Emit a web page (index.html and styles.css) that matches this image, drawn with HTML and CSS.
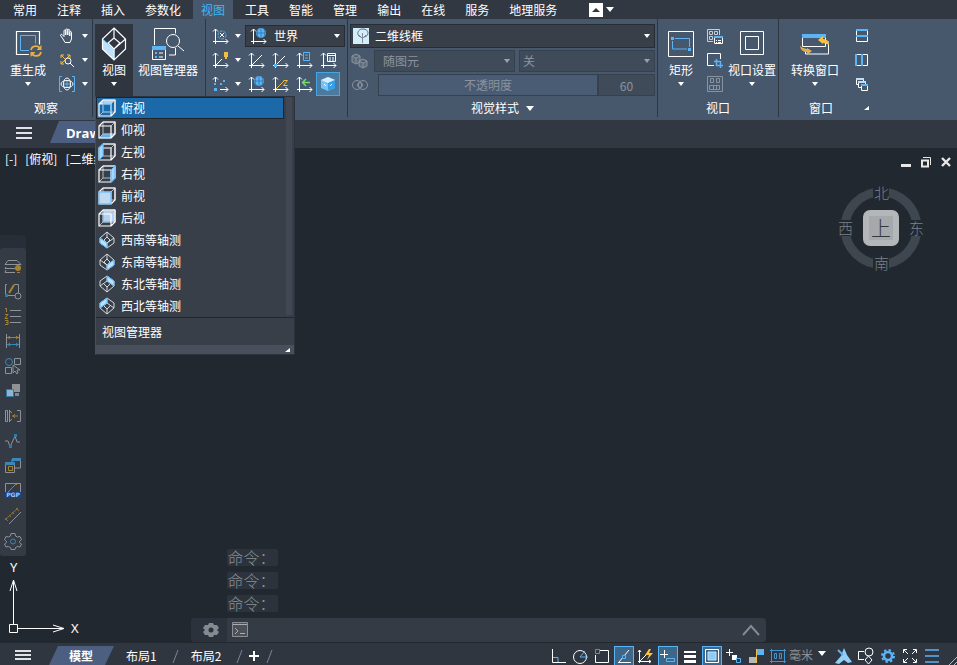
FILE: index.html
```html
<!DOCTYPE html>
<html lang="zh-CN">
<head>
    <meta charset="UTF-8">
    <meta name="viewport" content="width=device-width, initial-scale=1.0">
    <title>CAD</title>
    <link rel="stylesheet" href="styles.css">
</head>
<body>
    <svg class="sprite" aria-hidden="true">
        <symbol id="axes" viewBox="0 0 20 20">
            <path d="M5.500 3v15M3 15.500h15M3 5.500l2.500-2.500 2.500 2.500M15.500 13l2.500 2.500-2.500 2.500"/>
        </symbol>
        <symbol id="cube" viewBox="0 0 18 18">
            <path d="M5 1h12v12H5zM1 5l4-4M13 5l4-4M1 17l4-4M13 17l4-4" stroke="#b4b9bf"/>
            <path d="M1 5h12v12H1zM1 5l4-4h12v12l-4 4" stroke="#fff" stroke-width="1.200"/>
        </symbol>
        <symbol id="iso" viewBox="0 0 16 18">
            <path d="M8 1l7 6v5l-7 5-7-5V7zM8 1v5M8 6l-3 3 3 3 3-3zM1 7l7 5 7-5M8 12v5" stroke="#d6d9dd"/>
        </symbol>
        <symbol id="iso-north" viewBox="0 0 16 18">
            <path d="M8 1l7 5v5l-7 6-7-6V6zM8 17v-5M1 11l7-5 7 5M8 1v5M5 9l3 3 3-3" stroke="#d6d9dd"/>
        </symbol>
    </svg>

    <nav class="tabs">
        <button>常用</button>
        <button>注释</button>
        <button>插入</button>
        <button>参数化</button>
        <button class="active">视图</button>
        <button>工具</button>
        <button>智能</button>
        <button>管理</button>
        <button>输出</button>
        <button>在线</button>
        <button>服务</button>
        <button>地理服务</button>
        <div class="tabs-end">
            <button class="minimize" aria-label="最小化功能区"><i class="up"></i></button>
            <i class="caret wide"></i>
        </div>
    </nav>

    <div class="ribbon">
        <section class="panel">
            <div class="panel-body">
                <button class="big regen">
                    <svg width="30" height="32" viewBox="0 0 30 32">
                        <path d="M16 26.500H3.500v-23h23v13" stroke-width="1.200"/>
                        <path d="M16 22.500H7.500v-15h15v8" stroke="#5ab4f5"/>
                        <path d="M18 22c1-5 8-5 9-1M28 24c-1 5-8 5-9 1" stroke="#e5af49" stroke-width="1.800"/>
                        <path d="M28.500 17v5h-5zM17.500 29v-5h5z" fill="#e5af49" stroke="none"/>
                    </svg>
                    <span>重生成</span><i class="caret"></i>
                </button>
                <div class="grid two">
                    <button class="tool" aria-label="平移"><svg width="20" height="20" viewBox="0 0 20 20"><path d="M6 13l-2.500-3.500c0-1.500 1.500-1.500 2-.5l1.500 1.500V5c0-1.500 1.800-1.500 1.800 0v4V4c0-1.500 2-1.500 2 0v5V4.500c0-1.500 2-1.500 2 0V10V6.500c0-1.300 1.700-1.300 1.700 0V13l-1.500 3.500h-5z"/></svg></button><i class="caret"></i>
                    <button class="tool" aria-label="缩放"><svg width="20" height="20" viewBox="0 0 20 20"><path d="M4 8V5h3M10 5h3v3M4 11v3h3M4 5l9 9M13 5l-9 9" stroke="#f2be4a"/><circle cx="11" cy="11" r="3" fill="#47576c"/><path d="M13 13l4 4"/></svg></button><i class="caret"></i>
                    <button class="tool" aria-label="动态观察"><svg width="20" height="20" viewBox="0 0 20 20"><path d="M5 2.500H2.500v15H5M15 2.500h2.500v15H15" stroke="#5ab4f5"/><ellipse cx="10" cy="10" rx="6" ry="3.500"/><ellipse cx="10" cy="10" rx="3.500" ry="6"/><path d="M10 7v6M7 10h6" stroke="#5ab4f5"/></svg></button><i class="caret"></i>
                </div>
            </div>
            <h2>观察</h2>
        </section>

        <section class="panel">
            <div class="panel-body">
                <div class="menu-anchor">
                    <button class="big pressed">
                        <svg width="26" height="34" viewBox="0 0 26 34">
                            <path d="M1.500 12l11.500 10v11l-11.500-11z" fill="#bfe0fa" stroke="#5ab4f5"/>
                            <path d="M13 1l11.500 11v10L13 33 1.500 22V12zM13 1v10M13 11l-6 5 6 6 6-6zM24.500 12L13 22v11" stroke-width="1.200"/>
                        </svg>
                        <span>视图</span><i class="caret"></i>
                    </button>
                    <div class="menu">
                        <div class="menu-scroll">
                            <ul>
                                <li><button class="selected"><svg width="18" height="18"><path d="M1 5l4-4h12l-4 4z" fill="#a9d5f8" stroke="none"/><use href="#cube"/><path d="M5 5h8v8H5z" stroke="#5ab4f5"/></svg>俯视</button></li>
                                <li><button><svg width="18" height="18"><path d="M1 17l4-4h12l-4 4z" fill="#5ab4f5" stroke="#5ab4f5"/><use href="#cube"/></svg>仰视</button></li>
                                <li><button><svg width="18" height="18"><use href="#cube"/><path d="M1 5l4-4v12l-4 4z" fill="#a9d5f8" stroke="#5ab4f5"/></svg>左视</button></li>
                                <li><button><svg width="18" height="18"><use href="#cube"/><path d="M13 5l4-4v12l-4 4z" fill="#a9d5f8" stroke="#5ab4f5"/></svg>右视</button></li>
                                <li><button><svg width="18" height="18"><use href="#cube"/><path d="M1 5h12v12H1z" fill="#c2d9f2" stroke="#5ab4f5"/></svg>前视</button></li>
                                <li><button><svg width="18" height="18"><path d="M5 1h12v12H5z" fill="#b4d2f0" stroke="#5ab4f5"/><use href="#cube"/></svg>后视</button></li>
                                <li><button><svg width="18" height="18" viewBox="-1 0 18 18"><use href="#iso" width="16" height="18"/><path d="M1 7l7 5v5l-7-5z" fill="#bfe0fa" stroke="#5ab4f5"/></svg>西南等轴测</button></li>
                                <li><button><svg width="18" height="18" viewBox="-1 0 18 18"><use href="#iso" width="16" height="18"/><path d="M15 7l-7 5v5l7-5z" fill="#bfe0fa" stroke="#5ab4f5"/></svg>东南等轴测</button></li>
                                <li><button><svg width="18" height="18" viewBox="-1 0 18 18"><use href="#iso-north" width="16" height="18"/><path d="M8 1l7 5v5L8 6z" fill="#bfe0fa" stroke="#5ab4f5"/></svg>东北等轴测</button></li>
                                <li><button><svg width="18" height="18" viewBox="-1 0 18 18"><use href="#iso-north" width="16" height="18"/><path d="M8 1L1 6v5l7-5z" fill="#bfe0fa" stroke="#5ab4f5"/></svg>西北等轴测</button></li>
                            </ul>
                            <div class="scrollbar"></div>
                        </div>
                        <button class="menu-manager">视图管理器</button>
                        <div class="menu-grip"><i class="corner"></i></div>
                    </div>
                </div>
                <button class="big manager">
                    <svg width="34" height="32" viewBox="0 0 34 32">
                        <path d="M3.500 17V.5h21v5M24.500 20v7H18"/>
                        <circle cx="22" cy="13" r="6.500" fill="#47576c"/>
                        <path d="M27 18l6 5"/>
                        <path d="M1.500 19.500h13v12h-13z" fill="#47576c"/>
                        <path d="M1 18h14v4H1z" fill="#5ab4f5" stroke="none"/>
                        <path d="M4 24h2v2H4zM4 28h2v2H4z" fill="#5ab4f5" stroke="none"/>
                        <path d="M8 25h4M8 29h4"/>
                    </svg>
                    <span>视图管理器</span>
                </button>
            </div>
        </section>

        <section class="panel">
            <div class="panel-body">
                <div class="grid ucs">
                    <button class="tool" aria-label="UCS"><svg width="20" height="20"><use href="#axes"/><circle cx="12" cy="9" r="4" stroke="#5ab4f5" stroke-dasharray="3 1"/><path d="M10 7l4 4M14 7l-4 4"/></svg></button><i class="caret"></i>
                    <div class="combo world">
                        <svg width="20" height="20"><use href="#axes"/><circle cx="13" cy="7" r="5" fill="#5ab4f5" stroke="none"/><path d="M13 2v10M8 7h10M10 3c-1 3-1 5 0 8M16 3c1 3 1 5 0 8" stroke="#2c6c9f" stroke-width=".7"/></svg>
                        <select aria-label="坐标系"><option>世界</option></select>
                    </div>
                    <button class="tool" aria-label="原点"><svg width="20" height="20"><use href="#axes"/><path d="M6 15l6-6"/><path d="M14 2h4v5h-1v2h-2V7h-1z" fill="#f2be4a" stroke="none"/></svg></button><i class="caret"></i>
                    <button class="tool" aria-label="上一个"><svg width="20" height="20"><use href="#axes"/><path d="M6 15L16 5"/></svg></button>
                    <button class="tool" aria-label="Z轴"><svg width="20" height="20"><use href="#axes"/><path d="M6 15L15 6"/><path d="M4 14h3v3H4z" fill="#5ab4f5" stroke="none"/></svg></button>
                    <button class="tool" aria-label="视图"><svg width="20" height="20"><use href="#axes"/><path d="M9.500 2.500h6v8h-6zM11 5h3M11 8h3" stroke="#5ab4f5"/></svg></button>
                    <button class="tool" aria-label="对象"><svg width="20" height="20"><use href="#axes"/><path d="M9.500 3.500h8v8h-8zM9.500 5.500h8M11 8h2M14 8h2M11 10h2M14 10h2"/></svg></button>
                    <button class="tool" aria-label="三点"><svg width="20" height="20"><path d="M5.500 3v5M10 15.500h8M3 5.500l2.500-2.500 2.500 2.500M15.500 13l2.500 2.500-2.500 2.500"/><path d="M4 14h3v3H4zM4 9h2v2H4zM10 9h2v2h-2zM13 6h2v2h-2z" fill="#5ab4f5" stroke="none"/></svg></button><i class="caret"></i>
                    <button class="tool" aria-label="世界"><svg width="20" height="20"><use href="#axes"/><circle cx="13" cy="7" r="5" fill="#5ab4f5" stroke="none"/><path d="M13 2v10M8 7h10M10 3c-1 3-1 5 0 8M16 3c1 3 1 5 0 8" stroke="#2c6c9f" stroke-width=".7"/></svg></button>
                    <button class="tool" aria-label="绕Z轴"><svg width="20" height="20"><use href="#axes"/><path d="M6 15l9-9M13.500 6.500h4l-4 5h4" stroke="#f2be4a"/></svg></button>
                    <button class="tool" aria-label="应用"><svg width="20" height="20"><use href="#axes"/><path d="M16 8.500H9M12 5L8.500 8.500 12 12" stroke="#6fdc6f" stroke-width="1.500"/></svg></button>
                    <button class="tool on" aria-label="视图立方体"><svg width="20" height="20"><path d="M10 3l7 3v8l-7 3-7-3V6z" fill="#74c4f7" stroke="none"/><path d="M10 3l7 3-7 3-7-3z" fill="#d5effe" stroke="none"/><path d="M10 9l7-3v8l-7 3z" fill="#3a9ee6" stroke="none"/><path d="M6 10l2 2M12 12l2-2" stroke="#fff"/></svg></button>
                </div>
            </div>
        </section>

        <section class="panel">
            <div class="panel-body">
                <div class="styles">
                    <div class="combo visual">
                        <svg width="16" height="16"><path d="M0 0h16v16H0z" fill="#d3edfb" stroke="none"/><path d="M8 9c-5-1-4-8 2-8s7 7 1 8" stroke="#5b6d7c"/><path d="M9.500 5v10M6 7l3 3M13 7l-3 3" stroke="#7d8d99"/></svg>
                        <select aria-label="视觉样式"><option>二维线框</option></select>
                    </div>
                    <div class="style-row">
                        <svg width="20" height="20" class="dim"><path d="M2 5l4-2 4 2v6l-4 2-4-2zM6 7v6M2 5l4 2 4-2M9 10l4-2 4 2v5l-4 2-4-2zM13 12v5M9 10l4 2 4-2" fill="#5f6b7b"/></svg>
                        <div class="combo off"><select aria-label="边" disabled><option>随图元</option></select></div>
                        <div class="combo off"><select aria-label="阴影" disabled><option>关</option></select></div>
                    </div>
                    <div class="style-row opacity">
                        <svg width="20" height="20" class="dim"><circle cx="7" cy="10" r="4.500"/><circle cx="13" cy="10" r="4.500"/><circle cx="10" cy="10" r="2.500"/></svg>
                        <div class="slider">
                            <input type="range" id="opacity" value="60" disabled>
                            <label for="opacity">不透明度</label>
                        </div>
                        <input type="text" class="value" value="60" aria-label="不透明度值" disabled>
                    </div>
                </div>
            </div>
            <h2>视觉样式<i class="caret wide"></i></h2>
        </section>

        <section class="panel">
            <div class="panel-body">
                <button class="big rect">
                    <svg width="30" height="32" viewBox="0 0 30 32">
                        <path d="M2.500 3.500h25v25h-25z"/>
                        <path d="M6.500 13v8H21M9 10.500h14.500V19" stroke="#5ab4f5"/>
                        <path d="M5 9h3v3H5zM22 20h3v3h-3z" fill="#5ab4f5" stroke="none"/>
                    </svg>
                    <span>矩形</span><i class="caret"></i>
                </button>
                <div class="grid one">
                    <button class="tool" aria-label="命名视口"><svg width="20" height="20"><path d="M8 15.500H2.500v-12h12V9M4.500 5.500h3v3h-3zM9.500 5.500h3v3h-3zM4.500 10.500h3v3h-3z" stroke="#c6ccd4"/><path d="M9.500 11.500h8v6h-8z" fill="#47576c"/><path d="M9 10h9v2H9z" fill="#5ab4f5" stroke="none"/><path d="M11 14.500h1M13 14.500h3M11 16.500h1M13 16.500h3"/></svg></button>
                    <button class="tool" aria-label="剪裁视口"><svg width="20" height="20"><path d="M9 15.500H2.500v-12h13V9"/><path d="M11.500 9v6.500H18M9 11.500h6.500V18" stroke="#5ab4f5" stroke-width="1.500"/></svg></button>
                    <button class="tool" aria-label="合并视口"><svg width="20" height="20" class="dim"><path d="M2.500 2.500h15v15h-15zM5.500 4.500h3v4h-3zM11.500 4.500h3v4h-3zM4.500 11.500h10v4h-10zM8.500 12v3M11.500 12v3"/></svg></button>
                </div>
                <button class="big">
                    <svg width="30" height="32" viewBox="0 0 30 32"><path d="M3.500 3.500h23v23h-23zM8.500 8.500h13v13h-13z"/></svg>
                    <span>视口设置</span><i class="caret"></i>
                </button>
            </div>
            <h2>视口</h2>
        </section>

        <section class="panel last">
            <div class="panel-body">
                <button class="big switch">
                    <svg width="30" height="32" viewBox="0 0 30 32">
                        <path d="M28.500 13v13h-23v-3"/>
                        <path d="M2.500 6.500h23v12h-23z" fill="#47576c"/>
                        <path d="M2 6h24v4H2zM26 13h3v3h-3z" fill="#5ab4f5" stroke="none"/>
                        <path d="M18 12l5-4v3q6 0 6 6-3-2-6-2v1z" fill="#fcc23b" stroke="none"/>
                        <path d="M12 23l-5 4v-3q-6 0-7-6 3 3 7 3v-1z" fill="#e5af49" stroke="none"/>
                    </svg>
                    <span>转换窗口</span><i class="caret"></i>
                </button>
                <div class="grid one">
                    <button class="tool" aria-label="水平平铺"><svg width="20" height="20"><path d="M4.500 3.500h11v12h-11z"/><path d="M4 3h12v2H4zM4 9h12v2H4z" fill="#5ab4f5" stroke="none"/></svg></button>
                    <button class="tool" aria-label="垂直平铺"><svg width="20" height="20"><path d="M4.500 4.500h11v11h-11z"/><path d="M3 4h2v12H3zM9 4h2v12H9z" fill="#5ab4f5" stroke="none"/></svg></button>
                    <button class="tool" aria-label="层叠"><svg width="20" height="20"><path d="M4.500 4.500h7v6h-7z"/><path d="M6.500 7.500h7v6h-7z" fill="#47576c"/><path d="M9.500 10.500h6v6h-6z" fill="#47576c"/><path d="M4 4h8v2H4zM6 7h8v2H6z" fill="#c6dbef" stroke="none"/><path d="M9 10h7v2H9z" fill="#5ab4f5" stroke="none"/></svg></button>
                </div>
            </div>
            <h2>窗口<i class="corner"></i></h2>
        </section>
    </div>

    <div class="documents">
        <button class="burger" aria-label="文件菜单"><svg width="16" height="12"><path d="M0 1h16M0 6h16M0 11h16" stroke-width="2"/></svg></button>
        <button class="doc-tab">Drawing1.dwg</button>
    </div>

    <main class="canvas">
        <div class="viewport-labels">
            <button>[-]</button>
            <button>[俯视]</button>
            <button>[二维线框]</button>
        </div>
        <div class="window-buttons">
            <button aria-label="最小化"><svg width="12" height="12"><path d="M1 9.500h10" stroke-width="3"/></svg></button>
            <button aria-label="还原"><svg width="12" height="12"><path d="M3 1.500h7.500V9" /><path d="M2 4.500h6v6H2z" stroke-width="2"/></svg></button>
            <button aria-label="关闭"><svg width="12" height="12"><path d="M2 2l8 8M10 2l-8 8" stroke-width="2.400"/></svg></button>
        </div>
        <div class="compass">
            <svg width="86" height="90" viewBox="0 0 86 90">
                <circle cx="43" cy="45" r="36" stroke="#3e4650" stroke-width="9"/>
                <path d="M35 0h16v18H35zM35 72h16v18H35zM0 37h16v16H0zM70 37h16v16H70z" fill="#212830" stroke="none"/>
            </svg>
            <span class="n">北</span><span class="w">西</span><span class="e">东</span><span class="s">南</span>
            <button>上</button>
        </div>

        <aside class="palette">
            <div class="palette-head"></div>
            <div class="palette-body">
                <button aria-label="图层"><svg width="20" height="20"><path d="M5 4.500h9l4 4H2zM3 11l-1 1.500h10M3 14l-1 2.500h10"/><circle cx="15" cy="12" r="3" fill="#a5822f" stroke="none"/><path d="M14 16.500h3" stroke="#a5822f"/></svg></button>
                <button aria-label="编辑"><svg width="20" height="20"><path d="M4 3.500H2.500v11H12M11 3.500h4.500V12"/><path d="M6 12l5-8" stroke="#a5822f" stroke-width="2"/><circle cx="15" cy="15" r="3"/><path d="M2 13h3v3H2z" fill="#2f7ba8" stroke="none"/></svg></button>
                <button aria-label="编号"><svg width="20" height="20"><path d="M7 4.500h11M7 10.500h11M7 16.500h11"/><path d="M2 2.500h1.500V6M2 8.500h3l-3 4h3M2 14.500h3v4H2M3 16.500h2" stroke="#a5822f"/></svg></button>
                <button aria-label="标注"><svg width="20" height="20"><path d="M3.500 3v14M16.500 3v14"/><path d="M4 6.500h12M7 5L5 6.500 7 8M13 5l2 1.500L13 8" stroke="#a5822f"/><path d="M4 13.500h12M7 12l-2 1.500L7 15M13 12l2 1.500-2 1.500" stroke="#3d87b8"/></svg></button>
                <button aria-label="选择"><svg width="20" height="20"><circle cx="6" cy="6" r="3.500" stroke="#3d87b8"/><path d="M11.500 2.500h6v6h-6zM2.500 11.500h6v6h-6zM10 9v8l2-2 2 3 1-1-1-3h3z"/></svg></button>
                <button aria-label="块"><svg width="20" height="20"><path d="M9 3h8v8H9z" fill="#8f9398" stroke="none"/><path d="M3.500 8.500h7v7h-7z" fill="#91b5cf" stroke="#2f7ba8"/><path d="M12 12h4v3h-4z" fill="#6f8ea6" stroke="none"/></svg></button>
                <button aria-label="镜像"><svg width="20" height="20"><path d="M2.500 4.500h2v11h-2zM6.500 4v12M6 4l3 3M9 13l-3 3M14 4.500h3.500v11H14"/><path d="M9 10h6M12 8l-2 2 2 2" stroke="#a5822f"/></svg></button>
                <button aria-label="曲线"><svg width="20" height="20"><path d="M2 10h3l2 6 5-11 2 6h3" /><path d="M6 14h3v3H6zM11 3h3v3h-3z" fill="#2f7ba8" stroke="none"/></svg></button>
                <button aria-label="参照"><svg width="20" height="20"><path d="M2.500 7.500h9v9h-9zM11 12h6.500V3.500H9V7"/><path d="M2 6h10v3H2zM9 2h9v3H9z" fill="#3d87b8" stroke="none"/><path d="M5.500 10.500h4v4h-4z" stroke="#a5822f"/></svg></button>
                <button aria-label="PGP"><svg width="20" height="20"><path d="M2.500 11V2.500h15V11"/><path d="M5 11l8-8M12 2l2 2" stroke="#a5822f"/><path d="M2 11h16v6H2z" fill="#0e4694" stroke="none"/><text x="10" y="16" text-anchor="middle">PGP</text></svg></button>
                <button aria-label="测量"><svg width="20" height="20"><path d="M6 18L18 6"/><path d="M2 14L15 2M2 12l3 3M6 9l2 2M9 6l2 2M13 2l3 3" stroke="#8a7038"/></svg></button>
                <button aria-label="设置"><svg width="20" height="20"><path d="M8 2.500h4l.5 2.500 2 1 2.500-.5 1.500 3-2 2v1l2 1.500-1.500 3-2.500-.5-2 1-.5 2H8l-.5-2-2-1-2.500.5-1.500-3 2-1.500v-1l-2-2 1.500-3 2.500.5 2-1z"/><circle cx="10" cy="10.500" r="2.500" stroke="#3d87b8"/></svg></button>
            </div>
        </aside>

        <svg class="origin" width="84" height="90" viewBox="0 -10 84 90">
            <path d="M13.500 20v45M18 68.500h45M9.500 64.500h8v8h-8zM10 31l3.500-11 3.500 11M53 65l11 3.500-11 3.500"/>
            <text x="10" y="12">Y</text>
            <text x="71" y="73">X</text>
        </svg>

        <div class="console">
            <p>命令：</p>
            <p>命令：</p>
            <p>命令：</p>
            <div class="command">
                <button class="settings" aria-label="自定义"><svg width="18" height="18"><path d="M7 2h4l1 2h3l2 3-2 2 2 2-2 3h-3l-1 2H7l-1-2H3l-2-3 2-2-2-2 2-3h3z" fill="#858a91" stroke="none"/><circle cx="9" cy="9" r="2.500" fill="#2b323b" stroke="none"/></svg></button>
                <label for="cmd"><svg width="16" height="16"><path d="M.5.500h15v14H.500z" fill="#4c5159" stroke="#8b8f95"/><path d="M1 2.500h14M3 6l3 3-3 3M8 11.500h5" stroke="#a9adb2"/></svg></label>
                <input type="text" id="cmd" aria-label="命令">
                <button class="expand" aria-label="展开"><svg width="18" height="12"><path d="M1 11l8-9 8 9" stroke="#858a91" stroke-width="2"/></svg></button>
            </div>
        </div>
    </main>

    <footer class="status">
        <button class="burger" aria-label="布局菜单"><svg width="16" height="12"><path d="M0 2h16M0 6h16M0 10h16" stroke-width="2"/></svg></button>
        <button class="layout current">模型</button>
        <button class="layout">布局1</button>
        <svg class="slash" width="7" height="13"><path d="M1 13L6 0"/></svg>
        <button class="layout">布局2</button>
        <svg class="slash" width="7" height="13"><path d="M1 13L6 0"/></svg>
        <button class="add" aria-label="新建布局"><svg width="12" height="12"><path d="M6 1v10M1 6h10" stroke-width="2"/></svg></button>
        <svg class="slash" width="7" height="13"><path d="M1 13L6 0"/></svg>

        <div class="toggles">
            <button aria-label="正交"><svg width="20" height="20"><path d="M4.500 3v13.500H18"/><path d="M5 11.500h5V16" stroke="#5ab4f5"/></svg></button>
            <button aria-label="极轴"><svg width="20" height="20"><circle cx="10" cy="11" r="6.500"/><path d="M10 11h8M10 11l5-6" stroke="#5ab4f5"/></svg></button>
            <button aria-label="对象捕捉"><svg width="20" height="20"><path d="M8 4.500h8.500v12h-13V9"/><path d="M3.500 3.500h4v4h-4z" stroke="#f05a50"/></svg></button>
            <button class="on" aria-label="对象追踪"><svg width="20" height="20"><path d="M4 16.500h13M5 16L15 4"/><path d="M8.500 9.500h3v3h-3z" stroke="#5ab4f5" fill="#3d6688"/></svg></button>
            <button aria-label="动态UCS"><svg width="20" height="20"><path d="M3.500 4v13M2 15.500h13M4 15l8-8M2 6l1.500-2L5 6M13 14l2 1.500-2 1.500"/><path d="M13 3l-4 6h4l-2 5 6-7h-4l2-4z" fill="#fcc23b" stroke="none"/></svg></button>
            <button class="on" aria-label="动态输入"><svg width="20" height="20"><path d="M6.500 4v8M2 8.500h8"/><path d="M8.500 12.500h8v3h-8z" stroke="#5ab4f5"/></svg></button>
            <button aria-label="线宽"><svg width="20" height="20"><path d="M4 6h12" stroke-width="2"/><path d="M4 10.500h12M4 15.500h12" stroke-width="3"/></svg></button>
            <button class="on" aria-label="透明度"><svg width="20" height="20"><path d="M3.500 3.500h13v13h-13z"/><path d="M6 6h8v8H6z" fill="#8ecbf5" stroke="#c0e2fa"/></svg></button>
            <button aria-label="循环选择"><svg width="20" height="20"><path d="M5.500 3v7M2 6.500h7"/><path d="M8 9h5v5H8z" fill="#fff" stroke="none"/><path d="M12.500 12.500h4v4h-4z" stroke="#5ab4f5" fill="#2f3640"/></svg></button>
            <button aria-label="注释监视"><svg width="20" height="20"><path d="M11 3h7v6h-7z" fill="#5ab4f5" stroke="none"/><path d="M10.500 3v14" stroke="#f2be4a"/><path d="M3 11h7v6H3z" fill="#b8b8b8" stroke="none"/></svg></button>
            <button class="units" aria-label="单位"><svg width="20" height="20"><path d="M3.500 3v14M16.500 3v14M2 4.500h16M2 15.500h16M6.500 7.500h2v5h-2zM11.500 7.500h2v5h-2z" stroke="#3f94d6"/></svg>毫米<i class="caret wide"></i></button>
            <button aria-label="注释比例"><svg width="20" height="20"><path d="M10 2l3 7 5 7-4 1-4-3-5 4-4-1 6-7z" fill="#8fd0fa" stroke="none"/><path d="M4 4l5 5" stroke="#5ab4f5" stroke-width="2"/></svg></button>
            <button aria-label="隔离对象"><svg width="20" height="20"><path d="M8 5.500H2.500v8H8"/><circle cx="13" cy="6" r="4"/><path d="M12.500 10l3.500 4-3.500 4L9 14z"/></svg></button>
            <button aria-label="工作空间"><svg width="20" height="20"><circle cx="10" cy="10" r="4" stroke="#5ab4f5" stroke-width="2.500"/><circle cx="10" cy="10" r="6" stroke="#5ab4f5" stroke-width="2" stroke-dasharray="2.400 2.300"/></svg></button>
            <button aria-label="全屏"><svg width="20" height="20"><path d="M3.500 7V3.500H7M13 3.500h3.500V7M16.500 13v3.500H13M7 16.500H3.500V13M4 4l4 4M16 4l-4 4M4 16l4-4M16 16l-4-4"/></svg></button>
            <button aria-label="自定义"><svg width="20" height="20"><path d="M3 4h14M3 10h14M3 16h14" stroke="#5ab4f5" stroke-width="1.500"/></svg></button>
            <svg class="resize" width="8" height="20"><path d="M0 19l8-8M4 20l4-4" stroke="#b8bcc1"/></svg>
        </div>
    </footer>
</body>
</html>
```
FILE: styles.css
```css
* {
    box-sizing: border-box;
}
body {
    display: flex;
    flex-direction: column;
    height: 100vh;
    margin: 0;
    overflow: hidden;
    background-color: #212830;
    color: #fff;
    font-family: "Noto Sans CJK SC", "Noto Sans", sans-serif;
    font-size: 12px;
    line-height: 18px;
}
button, input, select {
    margin: 0;
    padding: 0;
    border: none;
    background: none;
    color: inherit;
    font: inherit;
    white-space: nowrap;
}
svg {
    flex: none;
    display: block;
    fill: none;
    stroke: #fff;
}
.sprite {
    position: absolute;
    width: 0;
    height: 0;
}
.caret {
    flex: none;
    align-self: center;
    justify-self: center;
    border: 3px solid transparent;
    border-top: 4px solid #fff;
    border-bottom: none;
}
.caret.wide {
    border-width: 5px 4px 0;
}
.corner {
    border-left: 5px solid transparent;
    border-bottom: 4px solid #fff;
}

/* menu tabs */
.tabs {
    display: flex;
    flex: none;
    height: 19px;
    padding-left: 3px;
    background-color: #323842;
}
.tabs > button {
    margin: 0 2px;
    padding: 0 8px;
    line-height: 20px;
}
.tabs > .active {
    background-color: #47576c;
    color: #3fb8f5;
}
.tabs-end {
    display: flex;
    align-items: center;
    gap: 3px;
    margin-left: 22px;
}
.minimize {
    display: flex;
    align-items: center;
    justify-content: center;
    width: 14px;
    height: 14px;
    background-color: #fff;
}
.up {
    border: 4px solid transparent;
    border-top: none;
    border-bottom: 4px solid #323842;
}

/* ribbon */
.ribbon {
    display: flex;
    flex: none;
    height: 101px;
    background-color: #47576c;
}
.panel {
    display: flex;
    flex-direction: column;
    height: 98px;
    padding: 5px 2px 0;
    border-right: 1px solid #2f3640;
}
.panel.last {
    border: none;
}
.panel-body {
    display: flex;
    height: 72px;
}
.panel h2 {
    display: flex;
    align-items: center;
    justify-content: center;
    gap: 7px;
    margin: 3px 0 0;
    font-size: 12px;
    font-weight: normal;
}
.panel.last h2 {
    position: relative;
    padding-right: 14px;
}
.last .corner {
    position: absolute;
    right: 6px;
}
.big {
    display: flex;
    flex-direction: column;
    align-items: center;
    padding-top: 3px;
}
.big svg {
    height: 34px;
}
.big span {
    line-height: 18px;
}
.big .caret {
    margin-top: 3px;
}
.regen {
    width: 52px;
}
.manager {
    width: 70px;
}
.rect {
    width: 42px;
}
.switch {
    width: 68px;
}
.pressed {
    width: 38px;
    height: 72px;
    background-color: #2f3640;
}
.grid {
    display: grid;
    grid-auto-rows: 24px;
}
.grid.one {
    grid-template-columns: 26px;
}
.grid.two {
    grid-template-columns: 25px 11px;
}
.grid.ucs {
    grid-template-columns: 24px 12px repeat(4, 24px);
    padding-right: 5px;
}
.tool {
    display: flex;
    align-items: center;
    justify-content: center;
}
.tool.on {
    background-color: #4b7a9e;
    border: 1px solid #43a5e6;
}
.dim {
    stroke: #8a939f;
}

/* drop-downs and fields */
.combo {
    position: relative;
    display: flex;
    align-items: center;
    flex: 1;
    gap: 6px;
    min-width: 0;
    padding-left: 2px;
    background-color: #393f49;
    border: 1px solid #272d35;
}
.combo::after {
    content: "";
    position: absolute;
    right: 4px;
    border: 3px solid transparent;
    border-top: 4px solid #fff;
    border-bottom: none;
    pointer-events: none;
}
.combo select {
    flex: 1;
    min-width: 0;
    height: 20px;
    appearance: none;
    outline: none;
}
.combo.world {
    grid-column: span 4;
    margin: 1px -5px 1px 1px;
}
.combo.visual {
    flex: none;
    height: 24px;
}
.combo.off {
    background-color: #404b5a;
    border-color: #364150;
    padding-left: 8px;
}
.combo.off:last-child {
    padding-left: 3px;
}
.combo.off select, .opacity input {
    color: #8a939f;
    opacity: 1;
}
.combo.off::after {
    border-top-color: #9aa2ac;
}
.styles {
    display: flex;
    flex-direction: column;
    gap: 2px;
    width: 305px;
}
.style-row {
    display: flex;
    align-items: center;
    gap: 4px;
    height: 22px;
}
.style-row .combo {
    height: 22px;
}
.slider {
    position: relative;
    flex: 1;
    height: 22px;
}
.slider input {
    display: block;
    width: 100%;
    height: 22px;
    appearance: none;
    background-color: #4a5c73;
    border: 1px solid #364150;
}
.slider input::-webkit-slider-thumb {
    appearance: none;
    width: 0;
}
.slider label {
    position: absolute;
    inset: 0;
    color: #8a939f;
    line-height: 22px;
    text-align: center;
}
.opacity {
    gap: 0;
}
.opacity svg {
    margin-right: 8px;
}
.value {
    width: 57px;
    height: 22px;
    background-color: #404b5a;
    border: 1px solid #364150;
    text-align: center;
}

/* view menu */
.menu-anchor {
    position: relative;
}
.menu {
    position: absolute;
    top: 72px;
    left: 0;
    z-index: 10;
    width: 200px;
    background-color: #393f49;
    border: 1px solid #2d333c;
    border-left-color: #4a505b;
}
.menu-scroll {
    display: flex;
    gap: 2px;
    padding-right: 2px;
    border-bottom: 1px solid #22272e;
}
.menu ul {
    flex: 1;
    margin: 0;
    padding: 0;
    list-style: none;
}
.menu li button {
    display: flex;
    align-items: center;
    gap: 5px;
    width: 100%;
    height: 22px;
    padding-left: 2px;
}
.menu li .selected {
    background-color: #1b69a8;
    border: 1px solid #1e242c;
    padding-left: 1px;
}
.scrollbar {
    width: 6px;
    margin-bottom: 2px;
    background-color: #414854;
}
.menu-manager {
    display: block;
    width: 100%;
    height: 27px;
    padding-left: 6px;
    text-align: left;
}
.menu-grip {
    display: flex;
    align-items: center;
    justify-content: flex-end;
    height: 9px;
    padding-right: 4px;
    background-color: #4a505b;
}

/* document tabs */
.documents {
    display: flex;
    flex: none;
    align-items: flex-start;
    height: 28px;
    background-color: #323842;
}
.burger {
    display: flex;
    align-items: center;
    justify-content: center;
    width: 48px;
    height: 26px;
}
.burger svg {
    stroke: #dfe2e6;
}
.doc-tab {
    height: 22px;
    margin: 1px 0 0 2px;
    padding: 2px 24px 0 16px;
    background-color: #4c5f80;
    clip-path: polygon(9px 0, 100% 0, calc(100% - 9px) 100%, 0 100%);
    font-family: "Open Sans", "Noto Sans", sans-serif;
    font-size: 13px;
    font-weight: bold;
}

/* drawing area */
.canvas {
    position: relative;
    flex: 1;
    min-height: 0;
}
.viewport-labels {
    display: flex;
    gap: 8px;
    padding: 2px 5px;
}
.window-buttons {
    position: absolute;
    top: 8px;
    right: 5px;
    display: flex;
    gap: 8px;
}
.window-buttons svg {
    stroke: #e8e8e8;
}
.compass {
    position: absolute;
    top: 35px;
    right: 33px;
    color: #7b8188;
    font-size: 15px;
    font-weight: 300;
}
.compass span, .compass button {
    position: absolute;
}
.compass .n {
    top: 1px;
    left: 36px;
}
.compass .s {
    bottom: 1px;
    left: 36px;
}
.compass .w {
    top: 36px;
    left: 0;
}
.compass .e {
    top: 36px;
    right: 0;
}
.compass button {
    top: 27px;
    left: 25px;
    width: 36px;
    height: 36px;
    background-color: #a6a9ac;
    border: 6px solid #b4b7ba;
    border-radius: 7px;
    color: #34383d;
    font-size: 20px;
    line-height: 24px;
}
.palette {
    position: absolute;
    top: 87px;
    left: 0;
    width: 26px;
    background-color: #272e37;
    border-radius: 0 4px 4px 0;
}
.palette-head {
    height: 13px;
}
.palette-body {
    padding: 5px 0 3px;
    background-color: #343b45;
    border-radius: 3px;
}
.palette-body button {
    display: flex;
    align-items: center;
    justify-content: center;
    width: 26px;
    height: 25px;
}
.palette svg {
    stroke: #8f9398;
}
.palette text {
    fill: #a9c6ea;
    stroke: none;
    font: bold 6px "DejaVu Sans", sans-serif;
}
.origin {
    position: absolute;
    left: 0;
    bottom: 3px;
}
.origin text {
    fill: #fff;
    stroke: none;
    font: 13px "Noto Sans", sans-serif;
}
.console {
    position: absolute;
    left: 20%;
    right: 20%;
    bottom: 0;
    color: #8b9096;
}
.console p {
    width: 51px;
    height: 17px;
    margin: 0 0 6px 36px;
    background-color: #2c333c;
    border-radius: 2px;
    font-size: 16px;
    font-weight: 300;
    line-height: 16px;
}
.command {
    display: flex;
    align-items: center;
    height: 24px;
    margin-bottom: 1px;
    background-color: #353b45;
    border-radius: 4px;
    overflow: hidden;
}
.settings {
    display: flex;
    align-items: center;
    justify-content: flex-end;
    width: 36px;
    height: 24px;
    margin-right: 5px;
    padding-right: 7px;
    background-color: #2b323b;
}
.command input {
    flex: 1;
    height: 24px;
    padding-left: 6px;
    outline: none;
}
.expand {
    padding: 0 6px;
}

/* status bar */
.status {
    display: flex;
    flex: none;
    align-items: center;
    height: 22px;
    background-color: #2f3640;
}
.status .burger {
    width: 46px;
    padding-top: 2px;
}
.layout {
    height: 22px;
    padding: 4px 15px 0 12px;
}
.layout.current {
    height: 19px;
    align-self: flex-end;
    margin-left: 3px;
    padding: 1px 21px 0 20px;
    background-color: #4c5f80;
    clip-path: polygon(9px 0, 100% 0, calc(100% - 9px) 100%, 0 100%);
    font-weight: bold;
}
.slash {
    margin-top: 4px;
    stroke: #7b8496;
}
.add {
    padding: 4px 6px 0 5px;
}
.toggles {
    display: flex;
    gap: 2px;
    height: 19px;
    margin: 3px 0 0 auto;
}
.toggles button {
    display: flex;
    justify-content: center;
    width: 20px;
    height: 20px;
}
.toggles .on {
    background-color: #3d6688;
    outline: 1px solid #5ab4f5;
    outline-offset: -1px;
}
.toggles .units {
    width: 64px;
    gap: 1px;
    justify-content: flex-start;
    color: #8b9096;
}
.units .caret {
    margin: 0 0 5px 4px;
}
.resize {
    margin-left: 5px;
}
```
